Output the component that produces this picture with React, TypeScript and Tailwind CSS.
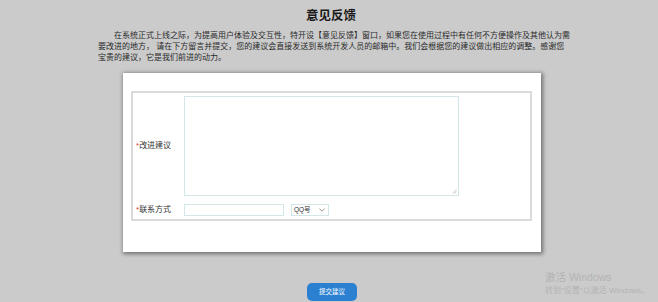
import { useState } from "react";

const font = { fontFamily: '"Liberation Sans", "Noto Sans CJK SC", sans-serif' };

function Label({ text }: { text: string }) {
  return (
    <span className="whitespace-nowrap text-[8px] text-[#333]">
      <span className="text-[#e03b3b]">*</span>
      {text}
    </span>
  );
}

export default function App() {
  const [advice, setAdvice] = useState("");
  const [contact, setContact] = useState("");

  return (
    <div
      className="relative flex h-[302px] w-[658px] flex-col overflow-hidden bg-[#cbcbcb]"
      style={font}
    >
      <h1 className="ml-[4px] pt-[8px] text-center text-[12.5px] font-bold leading-[16px] text-[#1a1a1a]">
        意见反馈
      </h1>

      <p className="ml-[98px] mt-[6px] w-[480px] whitespace-nowrap text-[8px] leading-[11px] text-[#2a2a2a]">
        <span className="pl-[16px]" />
        在系统正式上线之际，为提高用户体验及交互性，特开设【意见反馈】窗口，如果您在使用过程中有任何不方便操作及其他认为需
        <br />
        要改进的地方，&nbsp;请在下方留言并提交，您的建议会直接发送到系统开发人员的邮箱中。我们会根据您的建议做出相应的调整。感谢您
        <br />
        宝贵的建议，它是我们前进的动力。
      </p>

      <div className="ml-[123px] mt-[10px] h-[179px] w-[418px] bg-white pb-[31px] pl-[8px] pr-[9px] pt-[18px] shadow-[1px_1px_4px_1px_rgba(0,0,0,0.45)]">
        <div className="grid grid-cols-[48px_1fr] items-center gap-y-[8px] border-2 border-[#d9d9d9] py-[3px] pl-[3px]">
          <Label text="改进建议" />
          <div className="relative h-[100px] w-[275px]">
            <textarea
              value={advice}
              onChange={(e) => setAdvice(e.target.value)}
              className="block h-full w-full resize-none border border-[#d3e7e9] bg-white outline-none"
            />
            <svg
              className="pointer-events-none absolute bottom-[2px] right-[2px]"
              width="5"
              height="5"
              viewBox="0 0 5 5"
              stroke="#b5b5b5"
              strokeWidth="0.7"
            >
              <path d="M0.5 4.5 L4.5 0.5 M2.5 4.5 L4.5 2.5" />
            </svg>
          </div>
          <Label text="联系方式" />
          <div className="flex items-center gap-[7px]">
            <input
              value={contact}
              onChange={(e) => setContact(e.target.value)}
              className="h-[12px] w-[100px] border border-[#d3e7e9] bg-white outline-none"
            />
            <div className="flex h-[12px] w-[38px] items-center justify-between border border-[#d3e7e9] pl-[2px] pr-[3px] text-[6.5px] leading-none text-[#333]">
              <span>QQ号</span>
              <svg width="6" height="4" viewBox="0 0 6 4" fill="none" stroke="#777" strokeWidth="0.8">
                <path d="M0.5 0.8 L3 3.2 L5.5 0.8" />
              </svg>
            </div>
          </div>
        </div>
      </div>

      <button className="ml-[307px] mt-[31px] flex h-[18px] w-[50px] items-center justify-center rounded-[5px] bg-[#2b80d2] text-[6.5px] text-white">
        提交建议
      </button>

      <div className="pointer-events-none absolute left-[545px] top-[270px] text-[#b3b3b3]">
        <div className="text-[10.5px] leading-[14px]">激活 Windows</div>
        <div className="text-[8px] leading-[13px]">转到"设置"以激活 Windows。</div>
      </div>
    </div>
  );
}
